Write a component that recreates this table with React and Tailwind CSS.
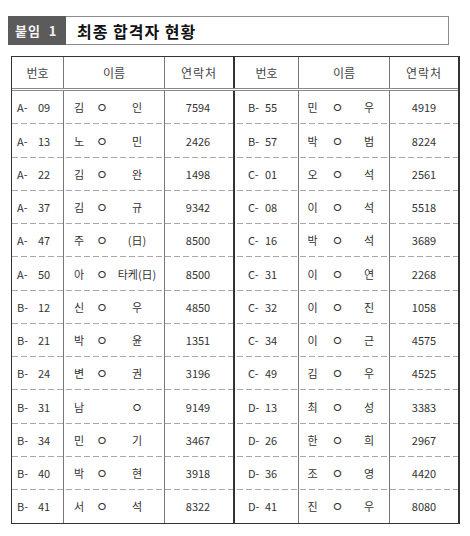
const left = [
  ["A-", "09", "김", "ㅇ", "인", "7594"],
  ["A-", "13", "노", "ㅇ", "민", "2426"],
  ["A-", "22", "김", "ㅇ", "완", "1498"],
  ["A-", "37", "김", "ㅇ", "규", "9342"],
  ["A-", "47", "주", "ㅇ", "(日)", "8500"],
  ["A-", "50", "아", "ㅇ", "타케(日)", "8500"],
  ["B-", "12", "신", "ㅇ", "우", "4850"],
  ["B-", "21", "박", "ㅇ", "윤", "1351"],
  ["B-", "24", "변", "ㅇ", "권", "3196"],
  ["B-", "31", "남", "", "ㅇ", "9149"],
  ["B-", "34", "민", "ㅇ", "기", "3467"],
  ["B-", "40", "박", "ㅇ", "현", "3918"],
  ["B-", "41", "서", "ㅇ", "석", "8322"],
];

const right = [
  ["B-", "55", "민", "ㅇ", "우", "4919"],
  ["B-", "57", "박", "ㅇ", "범", "8224"],
  ["C-", "01", "오", "ㅇ", "석", "2561"],
  ["C-", "08", "이", "ㅇ", "석", "5518"],
  ["C-", "16", "박", "ㅇ", "석", "3689"],
  ["C-", "31", "이", "ㅇ", "연", "2268"],
  ["C-", "32", "이", "ㅇ", "진", "1058"],
  ["C-", "34", "이", "ㅇ", "근", "4575"],
  ["C-", "49", "김", "ㅇ", "우", "4525"],
  ["D-", "13", "최", "ㅇ", "성", "3383"],
  ["D-", "26", "한", "ㅇ", "희", "2967"],
  ["D-", "36", "조", "ㅇ", "영", "4420"],
  ["D-", "41", "진", "ㅇ", "우", "8080"],
];

const cols = "grid grid-cols-[52px_101px_70px_64px_91px_68px]";
const dash =
  "bg-[repeating-linear-gradient(90deg,#a9a9a9_0px,#a9a9a9_6px,transparent_6px,transparent_9px)] bg-[length:100%_1px] bg-bottom bg-no-repeat";

// the middle "ㅇ" of a masked name is drawn a little larger than the syllables
function Mark({ v }) {
  if (v !== "ㅇ") return v;
  return <span className="text-[13px] leading-none">ㅇ</span>;
}

function Row({ l, r, last }) {
  return (
    <div className={`${cols} h-[33.25px] text-[11px] text-[#333] ${last ? "" : dash}`}>
      <div className="flex items-center border-r border-[#777] pl-[5px]">
        <span className="w-[21px]">{l[0]}</span>
        <span>{l[1]}</span>
      </div>
      <div className="flex items-center border-r border-[#777]">
        <span className="w-[30px] text-center">{l[2]}</span>
        <span className="w-[16px] text-center"><Mark v={l[3]} /></span>
        <span className="w-[54px] text-center whitespace-nowrap"><Mark v={l[4]} /></span>
      </div>
      <div className="flex items-center justify-center border-r-2 border-[#333] pr-[2px]">{l[5]}</div>
      <div className="flex items-center border-r border-[#777] pl-[13px]">
        <span className="w-[17px]">{r[0]}</span>
        <span>{r[1]}</span>
      </div>
      <div className="flex items-center border-r border-[#777]">
        <span className="w-[27px] text-center">{r[2]}</span>
        <span className="w-[23px] text-center"><Mark v={r[3]} /></span>
        <span className="w-[40px] text-center"><Mark v={r[4]} /></span>
      </div>
      <div className="flex items-center justify-center">{r[5]}</div>
    </div>
  );
}

export default function App() {
  return (
    <div
      className="w-[470px] h-[536px] bg-white pt-[16px]"
      style={{ fontFamily: '"Noto Sans CJK KR", "Noto Sans", sans-serif' }}
    >
      <div className="ml-[8px] w-[441px] h-[29px] flex border border-[#8c8c8c]">
        <div className="w-[58px] -my-px -ml-px bg-[#5b5b5b] flex items-center pl-[7px] text-[13px] font-bold text-[#f2f2f2] tracking-[1px] whitespace-pre">
          붙임  1
        </div>
        <div className="flex items-center pl-[11px] text-[16px] font-bold text-[#111] tracking-[1px] whitespace-pre">
          최종 합격자 현황
        </div>
      </div>

      <div className="ml-[11px] mt-[11px] w-[449px] border-t-[1.5px] border-l border-r-2 border-b-[1.5px] border-[#333]">
        <div className={`${cols} h-[34px] text-[12px] text-[#444] border-b-[3px] border-double border-[#8a8a8a]`}>
          <div className="flex items-center justify-center border-r border-[#777]">번호</div>
          <div className="flex items-center justify-center border-r border-[#777]">이름</div>
          <div className="flex items-center justify-center border-r-2 border-[#333] tracking-[1px]">연락처</div>
          <div className="flex items-center justify-center border-r border-[#777]">번호</div>
          <div className="flex items-center justify-center border-r border-[#777]">이름</div>
          <div className="flex items-center justify-center tracking-[1px]">연락처</div>
        </div>
        {left.map((l, i) => (
          <Row key={i} l={l} r={right[i]} last={i === left.length - 1} />
        ))}
      </div>
    </div>
  );
}
